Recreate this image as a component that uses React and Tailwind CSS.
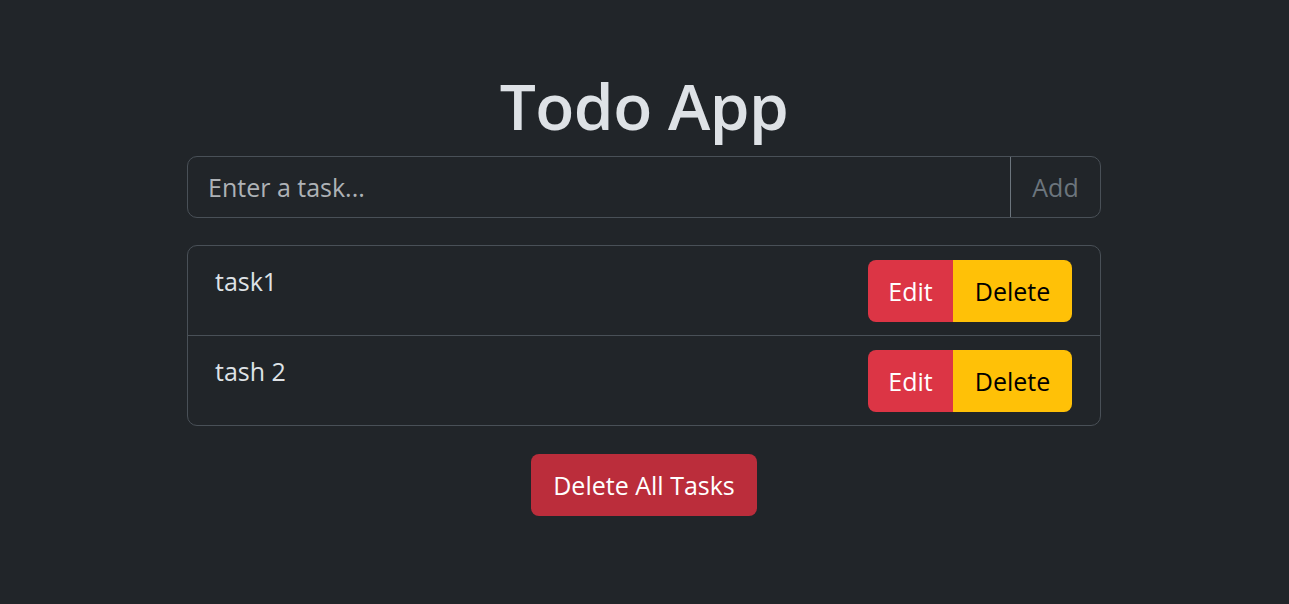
import { useState } from "react";

const INITIAL_TASKS = ["task1", "tash 2"];

export default function App() {
  const [tasks, setTasks] = useState(INITIAL_TASKS);
  const [text, setText] = useState("");

  function addTask() {
    if (!text.trim()) return;
    setTasks([...tasks, text.trim()]);
    setText("");
  }

  return (
    <div className="min-h-screen bg-[#212529] pr-px font-['Open_Sans',sans-serif] text-[#dee2e6]">
      <div className="mx-auto w-[914px] pt-[68px]">
        <h1 className="text-center text-[64px] font-semibold leading-[76px] tracking-[-0.5px]">
          Todo App
        </h1>

        {/* Input */}
        <div className="mt-[12px] flex h-[62px] rounded-[10px] border border-[#495057]">
          <input
            value={text}
            onChange={(e) => setText(e.target.value)}
            placeholder="Enter a task..."
            className="min-w-0 flex-1 bg-transparent px-[20px] pt-[2px] text-[25px] text-[#dee2e6] outline-none placeholder:text-[#aeb2b6]"
          />
          <button
            onClick={addTask}
            className="w-[90px] rounded-r-[10px] border-l border-[#6c757d] pt-[2px] text-[25px] text-[#6c757d]"
          >
            Add
          </button>
        </div>

        {/* Task list */}
        <ul className="mt-[27px] rounded-[10px] border border-[#495057]">
          {tasks.map((task, i) => (
            <li
              key={i}
              className="flex h-[90px] justify-between border-b border-[#495057] pl-[27px] pr-[28px] pt-[14px] last:h-[89px] last:border-b-0"
            >
              <span className="pt-[3px] text-[25px] leading-[36px]">{task}</span>
              <div className="flex h-[62px]">
                <button className="w-[85px] rounded-l-[8px] bg-[#dc3545] pt-[2px] text-[25px] text-white">
                  Edit
                </button>
                <button
                  onClick={() => setTasks(tasks.filter((_, j) => j !== i))}
                  className="w-[119px] rounded-r-[8px] bg-[#ffc107] pt-[2px] text-[25px] text-black"
                >
                  Delete
                </button>
              </div>
            </li>
          ))}
        </ul>

        <div className="mt-[28px] flex justify-center">
          <button
            onClick={() => setTasks([])}
            className="h-[62px] rounded-[8px] bg-[#bb2d3b] px-[22px] pt-[2px] text-[25px] text-white"
          >
            Delete All Tasks
          </button>
        </div>
      </div>
    </div>
  );
}
